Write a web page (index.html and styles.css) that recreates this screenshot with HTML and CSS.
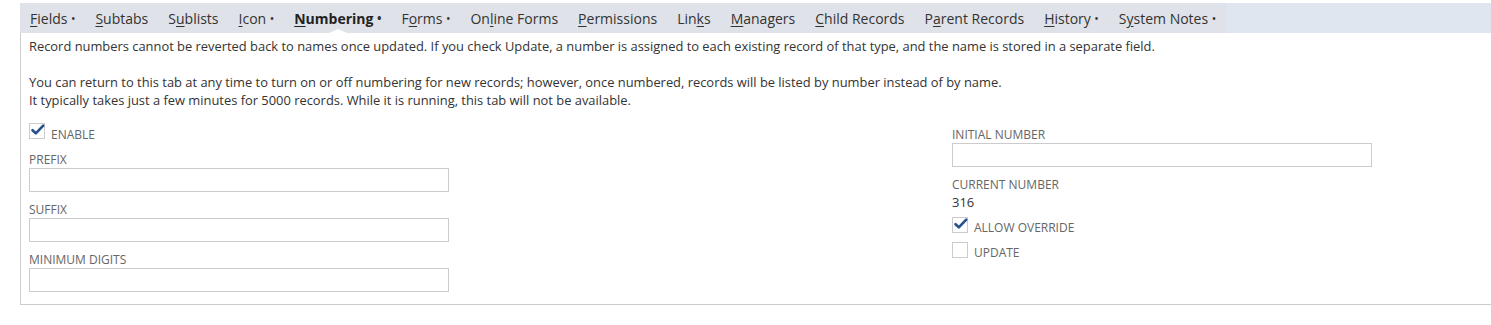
FILE: index.html
```html
<!DOCTYPE html>
<html>
<head>
<meta charset="utf-8">
<link rel="stylesheet" href="styles.css">
</head>
<body>
<div class="page">
  <div class="tabbar">
    <ul class="tabs">
      <li class="tab"><u>F</u>ields<span class="dot">•</span></li>
      <li class="tab"><u>S</u>ubtabs</li>
      <li class="tab">S<u>u</u>blists</li>
      <li class="tab"><u>I</u>con<span class="dot">•</span></li>
      <li class="tab active"><u>N</u>umbering<span class="dot">•</span></li>
      <li class="tab">F<u>o</u>rms<span class="dot">•</span></li>
      <li class="tab">On<u>l</u>ine Forms</li>
      <li class="tab"><u>P</u>ermissions</li>
      <li class="tab">Lin<u>k</u>s</li>
      <li class="tab"><u>M</u>anagers</li>
      <li class="tab"><u>C</u>hild Records</li>
      <li class="tab">P<u>a</u>rent Records</li>
      <li class="tab"><u>H</u>istory<span class="dot">•</span></li>
      <li class="tab">S<u>y</u>stem Notes<span class="dot">•</span></li>
    </ul>
  </div>
  <div class="panel">
    <div class="intro">
      <p>Record numbers cannot be reverted back to names once updated. If you check Update, a number is assigned to each existing record of that type, and the name is stored in a separate field.</p>
      <p class="blank">You can return to this tab at any time to turn on or off numbering for new records; however, once numbered, records will be listed by number instead of by name.<br>It typically takes just a few minutes for 5000 records. While it is running, this tab will not be available.</p>
    </div>
    <div class="columns">
      <div class="col col-left">
        <label class="check-row">
          <span class="checkbox checked"><svg viewBox="0 0 16 16" width="16" height="16"><path d="M2.5 8.2 L5.8 11.3 L13.2 3.6" fill="none" stroke="#24508c" stroke-width="2.6" stroke-linecap="round" stroke-linejoin="round"/></svg></span>
          <span class="check-label">ENABLE</span>
        </label>
        <div class="field">
          <div class="label">PREFIX</div>
          <div class="input"></div>
        </div>
        <div class="field">
          <div class="label">SUFFIX</div>
          <div class="input"></div>
        </div>
        <div class="field">
          <div class="label">MINIMUM DIGITS</div>
          <div class="input"></div>
        </div>
      </div>
      <div class="col col-right">
        <div class="field">
          <div class="label">INITIAL NUMBER</div>
          <div class="input"></div>
        </div>
        <div class="field">
          <div class="label">CURRENT NUMBER</div>
          <div class="value">316</div>
        </div>
        <label class="check-row small">
          <span class="checkbox checked"><svg viewBox="0 0 16 16" width="16" height="16"><path d="M2.5 8.2 L5.8 11.3 L13.2 3.6" fill="none" stroke="#24508c" stroke-width="2.6" stroke-linecap="round" stroke-linejoin="round"/></svg></span>
          <span class="check-label">ALLOW OVERRIDE</span>
        </label>
        <label class="check-row small">
          <span class="checkbox"></span>
          <span class="check-label">UPDATE</span>
        </label>
      </div>
    </div>
  </div>
</div>
</body>
</html>
```

FILE: styles.css
```css
html, body {
  margin: 0;
  padding: 0;
  background: #ffffff;
}

body {
  font-family: "Open Sans", "Liberation Sans", sans-serif;
  color: #333333;
}

.page {
  padding: 3px 0 0 20px;
}

.tabbar {
  background: #e0e6ef;
  height: 30px;
}

.tabs {
  list-style: none;
  margin: 0;
  padding: 0;
  display: inline-flex;
  height: 30px;
  background: #dfe2e8;
}

.tab {
  position: relative;
  display: flex;
  align-items: center;
  padding: 0 10px;
  font-size: 14px;
  color: #333333;
  white-space: nowrap;
}

.tab u {
  text-decoration: underline;
  text-underline-offset: 2px;
}

.tab .dot {
  font-size: 12px;
  margin-left: 3.5px;
  color: #333;
}

.tab.active {
  font-weight: bold;
  color: #222;
}

.tab.active::after {
  content: "";
  position: absolute;
  left: 50%;
  bottom: 0;
  margin-left: -9px;
  border-left: 9px solid transparent;
  border-right: 9px solid transparent;
  border-bottom: 4px solid #ffffff;
}

.panel {
  border-left: 1px solid #cccccc;
  border-bottom: 1px solid #cccccc;
  padding: 4px 0 4px 8px;
}

.intro p {
  margin: 0;
  font-size: 12.9px;
  line-height: 18px;
}

.intro p.blank {
  margin-top: 18px;
}

.columns {
  display: flex;
  margin-top: 12px;
}

.col-left {
  width: 923px;
}

.col-right {
  padding-top: 4px;
}

.check-row {
  display: flex;
  align-items: center;
  height: 20px;
  margin-bottom: 9px;
  margin-top: 0;
}

.check-row.small {
  height: 20px;
  margin-bottom: 5px;
}

.checkbox {
  width: 14px;
  height: 14px;
  border: 1px solid #cccccc;
  background: #fff;
  position: relative;
  flex: none;
}

.checkbox svg {
  position: absolute;
  left: 0;
  top: -2px;
}

.check-label {
  margin-left: 6px;
  font-size: 12px;
  color: #666666;
  padding-top: 6px;
}

.check-row.small .check-label {
  padding-top: 4px;
}

.field {
  margin-bottom: 8px;
}

.label {
  font-size: 12px;
  line-height: 18px;
  color: #666666;
  padding-top: 1px;
  margin-bottom: -1px;
}

.input {
  width: 418px;
  height: 22px;
  border: 1px solid #cccccc;
  background: #fff;
}

.value {
  font-size: 13px;
  line-height: 18px;
  color: #333;
  margin-top: 0;
}

.col-right .field:nth-child(2) {
  margin-bottom: 4px;
}
```
